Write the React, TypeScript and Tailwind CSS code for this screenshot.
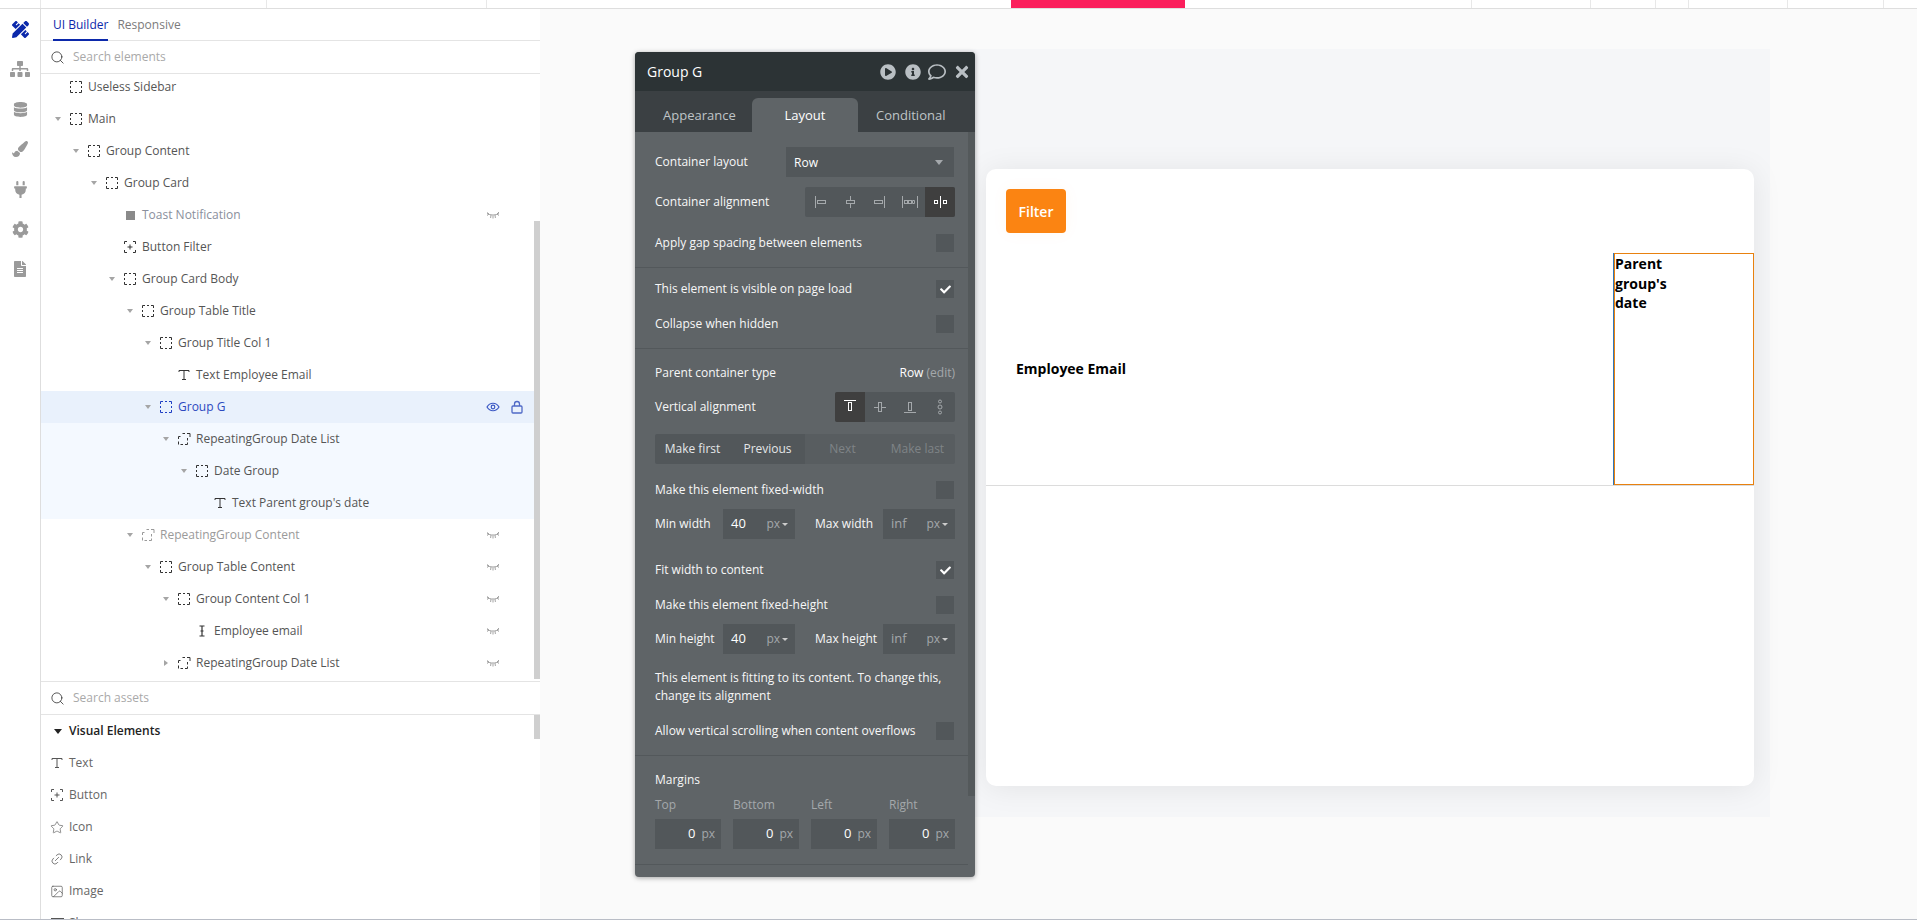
import React from "react";
import { FaPencilRuler, FaSitemap, FaDatabase, FaPaintBrush, FaPlug, FaCog, FaFileAlt, FaPlayCircle, FaInfoCircle, FaRegComment, FaTimes, FaCheck } from "react-icons/fa";
import { Search, Star, Link2, Image as ImageIcon } from "lucide-react";

const font = { fontFamily: '"Open Sans", sans-serif' };

function GroupIcon({ color = "#333", rg = false }: { color?: string; rg?: boolean }) {
  return (
    <svg width="14" height="14" viewBox="0 0 14 14" fill="none" stroke={color} strokeWidth="1" className="shrink-0">
      {rg ? (
        <path d="M1.500 7V4.500H3.500M5.500 1.500H8M10 1.500h3V5M10.500 6v2.500M10.500 10.500v2H8M6 12.500H3.500M1.500 12.500v-3" />
      ) : (
        <path d="M1.500 4V1.500H4M6 1.500h2M10 1.500h2.500V4M12.500 6v2M12.500 10v2.500H10M8 12.500H6M4 12.500H1.500V10M1.500 8V6" />
      )}
    </svg>
  );
}
function ButtonIcon({ color = "#333" }: { color?: string }) {
  return (
    <svg width="14" height="14" viewBox="0 0 14 14" fill="none" stroke={color} strokeWidth="1" className="shrink-0">
      <path d="M1.500 4V1.500H4M10 1.500h2.500V4M12.500 10v2.500H10M4 12.500H1.500V10M7 4.500v5M4.500 7h5" />
    </svg>
  );
}
function TIcon({ color = "#333" }: { color?: string }) {
  return (
    <svg width="12" height="12" viewBox="0 0 12 12" fill="none" stroke={color} strokeWidth="1" className="shrink-0">
      <path d="M1 3V1.500h10V3M6 1.500v9M4 10.500h4" />
    </svg>
  );
}
function InputIcon() {
  return (
    <svg width="12" height="12" viewBox="0 0 12 12" fill="none" stroke="#333" strokeWidth="1.200" className="shrink-0">
      <path d="M3.500 1h5M3.500 11h5M6 1v10M4.500 6h3" />
    </svg>
  );
}
function EyeClosed() {
  return (
    <svg width="14" height="8" viewBox="0 0 14 8" fill="none" stroke="#9a9a9a" strokeWidth="0.900">
      <path d="M1 2.500c3.500 2 8.500 2 12 0M1 1.500l2 1.500M1 4.500l2-1.500M13 1l-2 2M13 4.500l-2-1.500M5 4l-.4 3M7 4.500v3M9 4l.4 3" />
    </svg>
  );
}
function EyeOpen() {
  return (
    <svg width="14" height="12" viewBox="0 0 14 12" fill="none" stroke="#3b58c4" strokeWidth="1.200">
      <path d="M1 6c3-5 9-5 12 0-3 5-9 5-12 0z" />
      <circle cx="7" cy="6" r="1.800" />
    </svg>
  );
}
function LockOpen() {
  return (
    <svg width="12" height="14" viewBox="0 0 12 14" fill="none" stroke="#4f69c6" strokeWidth="1.300">
      <rect x="1" y="6" width="10" height="7" rx="1" />
      <path d="M3.500 6V4a2.500 2.500 0 0 1 5 0V6" />
    </svg>
  );
}

type Row = { t: string; l: number; arrow?: "d" | "r"; icon: "g" | "rg" | "b" | "t" | "i" | "s"; hidden?: boolean; faded?: boolean; toast?: boolean; sel?: boolean; child?: boolean };
const rows: Row[] = [
  { t: "Useless Sidebar", l: 0, icon: "g" },
  { t: "Main", l: 0, arrow: "d", icon: "g" },
  { t: "Group Content", l: 1, arrow: "d", icon: "g" },
  { t: "Group Card", l: 2, arrow: "d", icon: "g" },
  { t: "Toast Notification", l: 3, icon: "s", hidden: true, toast: true },
  { t: "Button Filter", l: 3, icon: "b" },
  { t: "Group Card Body", l: 3, arrow: "d", icon: "g" },
  { t: "Group Table Title", l: 4, arrow: "d", icon: "g" },
  { t: "Group Title Col 1", l: 5, arrow: "d", icon: "g" },
  { t: "Text Employee Email", l: 6, icon: "t" },
  { t: "Group G", l: 5, arrow: "d", icon: "g", sel: true },
  { t: "RepeatingGroup Date List", l: 6, arrow: "d", icon: "rg", child: true },
  { t: "Date Group", l: 7, arrow: "d", icon: "g", child: true },
  { t: "Text Parent group's date", l: 8, icon: "t", child: true },
  { t: "RepeatingGroup Content", l: 4, arrow: "d", icon: "rg", hidden: true, faded: true },
  { t: "Group Table Content", l: 5, arrow: "d", icon: "g", hidden: true },
  { t: "Group Content Col 1", l: 6, arrow: "d", icon: "g", hidden: true },
  { t: "Employee email", l: 7, icon: "i", hidden: true },
  { t: "RepeatingGroup Date List", l: 6, arrow: "r", icon: "rg", hidden: true },
];

function TreeRow({ r }: { r: Row }) {
  const iconColor = r.sel ? "#1f3fc4" : r.faded ? "#999" : "#333";
  const textColor = r.sel ? "#2c49bf" : r.faded ? "#9a9a9a" : r.toast ? "#8a8f9c" : "#555";
  return (
    <div
      className={`h-8 flex items-center text-[12px] ${r.sel ? "bg-[#e9f1fc]" : r.child ? "bg-[#f4f9ff]" : ""}`}
      style={{ paddingLeft: 18 * r.l + 11 }}
    >
      <span className="w-[12px] shrink-0 flex justify-center">
        {r.arrow === "d" && <span className="w-0 h-0 border-l-[3.500px] border-r-[3.500px] border-t-[4px] border-l-transparent border-r-transparent border-t-[#a5a5a5]" />}
        {r.arrow === "r" && <span className="w-0 h-0 border-t-[3.500px] border-b-[3.500px] border-l-[4px] border-t-transparent border-b-transparent border-l-[#a5a5a5]" />}
      </span>
      <span className="w-[12px] ml-[6px] shrink-0 flex justify-center">
        {r.icon === "g" && <GroupIcon color={iconColor} />}
        {r.icon === "rg" && <GroupIcon color={iconColor} rg />}
        {r.icon === "b" && <ButtonIcon />}
        {r.icon === "t" && <TIcon />}
        {r.icon === "i" && <InputIcon />}
        {r.icon === "s" && <span className="w-[9px] h-[9px] bg-[#8a8a8a]" />}
      </span>
      <span className="ml-[6px] whitespace-nowrap" style={{ color: textColor }}>{r.t}</span>
      <span className="ml-auto flex items-center gap-[11px] pr-[11px]">
        <span className="w-[14px] flex justify-center">
          {r.hidden && <EyeClosed />}
          {r.sel && <EyeOpen />}
        </span>
        <span className="w-[12px] flex justify-center">{r.sel && <LockOpen />}</span>
      </span>
    </div>
  );
}

function AssetRow({ icon, label }: { icon: React.ReactNode; label: string }) {
  return (
    <div className="h-8 flex items-center pl-[9px] text-[12px] text-[#666]">
      <span className="w-[14px] flex justify-center">{icon}</span>
      <span className="ml-[5px]">{label}</span>
    </div>
  );
}

function SearchRow({ text }: { text: string }) {
  return (
    <div className="h-[33px] shrink-0 flex items-center pl-[9px] border-b border-[#e4e4e4]">
      <Search size={15} strokeWidth={1.300} color="#333" />
      <span className="ml-[8px] text-[12px] text-[#a9a9a9]">{text}</span>
    </div>
  );
}

function Sidebar() {
  return (
    <aside className="w-[499px] shrink-0 bg-white flex flex-col relative overflow-hidden">
      <div className="h-[32px] shrink-0 flex items-center pl-[12px] border-b border-[#e4e4e4] text-[12px]">
        <span className="h-[32px] pt-[2px] flex items-center text-[#0c29ab] border-b-2 border-[#0c29ab]">UI Builder</span>
        <span className="ml-[9px] pt-px text-[#7b7b7b]">Responsive</span>
      </div>
      <SearchRow text="Search elements" />
      <div className="h-[608px] shrink-0 border-b border-[#e4e4e4] flex overflow-hidden">
        <div className="w-[493px] shrink-0 -mt-[3px]">
          {rows.map((r, i) => <TreeRow key={i} r={r} />)}
        </div>
        <div className="w-[6px] pt-[147px]">
          <div className="h-[458px] bg-[#cfcfcf]" />
        </div>
      </div>
      <SearchRow text="Search assets" />
      <div className="flex relative flex-1 min-h-0">
        <div className="w-[493px] shrink-0">
          <div className="h-8 flex items-center pl-[13px] text-[12px] font-semibold text-[#222]">
            <span className="w-0 h-0 border-l-[4px] border-r-[4px] border-t-[5px] border-l-transparent border-r-transparent border-t-[#222]" />
            <span className="ml-[7px]">Visual Elements</span>
          </div>
          <AssetRow icon={<TIcon color="#555" />} label="Text" />
          <AssetRow icon={<ButtonIcon color="#555" />} label="Button" />
          <AssetRow icon={<Star size={15} strokeWidth={1.100} color="#555" />} label="Icon" />
          <AssetRow icon={<Link2 size={14} strokeWidth={1.200} color="#555" className="-rotate-45" />} label="Link" />
          <AssetRow icon={<ImageIcon size={15} strokeWidth={1.200} color="#555" />} label="Image" />
          <AssetRow icon={<span className="w-[13px] h-[11px] border border-[#555]" />} label="Shape" />
        </div>
        <div className="w-[6px]">
          <div className="h-[24px] bg-[#cfcfcf]" />
        </div>
      </div>
    </aside>
  );
}

function Check({ on = false }: { on?: boolean }) {
  return (
    <span className="w-[18px] h-[18px] bg-[#52575a] flex items-center justify-center shrink-0">
      {on && <FaCheck size={11} color="#fff" />}
    </span>
  );
}

function CheckRow({ label, on, className = "" }: { label: string; on?: boolean; className?: string }) {
  return (
    <div className={`h-[18px] flex items-center justify-between pr-px whitespace-nowrap ${className}`}>
      <span>{label}</span>
      <Check on={on} />
    </div>
  );
}

function Divider({ className = "" }: { className?: string }) {
  return <div className={`h-px bg-[#53585b] -ml-5 -mr-[13px] ${className}`} />;
}

function AlignSvg({ children, color }: { children: React.ReactNode; color: string }) {
  return (
    <svg width="30" height="30" viewBox="0 0 30 30" fill="none" stroke={color} strokeWidth="1">
      {children}
    </svg>
  );
}

const hAlign = [
  <><path d="M10.500 9v12" /><rect x="12.500" y="13.500" width="8" height="3" /></>,
  <><path d="M15.500 9v4.500M15.500 16.500V21" /><rect x="11.500" y="13.500" width="8" height="3" /></>,
  <><path d="M19.500 9v12" /><rect x="9.500" y="13.500" width="8" height="3" /></>,
  <><path d="M7.500 9v12M22.500 9v12" /><rect x="9.500" y="13.500" width="3" height="3" /><rect x="13.500" y="13.500" width="3" height="3" /><path d="M17.500 13.500h2v3h-2z" /></>,
  <><path d="M15.500 9v12" /><rect x="9.500" y="13.500" width="3" height="3" /><rect x="18.500" y="13.500" width="3" height="3" /></>,
];
const vAlign = [
  <><path d="M9 8.500h12" /><rect x="13.500" y="10.500" width="3" height="8" /></>,
  <><path d="M9 15.500h4.500M16.500 15.500H21" /><rect x="13.500" y="10.500" width="3" height="9" /></>,
  <><path d="M9 20.500h12" /><rect x="13.500" y="10.500" width="3" height="8" /></>,
  <><circle cx="15" cy="9.500" r="1.500" /><circle cx="15" cy="15" r="2" /><circle cx="15" cy="20.500" r="1.500" /></>,
];

function Segments({ icons, active }: { icons: React.ReactNode[]; active: number }) {
  return (
    <div className="flex bg-[#52575a] rounded-[2px] overflow-hidden">
      {icons.map((ic, i) => (
        <span key={i} className={`w-[30px] h-[30px] ${i === active ? "bg-[#3f3f3f]" : ""}`}>
          <AlignSvg color={i === active ? "#fff" : "#a4a8ab"}>{ic}</AlignSvg>
        </span>
      ))}
    </div>
  );
}

function SizeInput({ value, muted }: { value: string; muted?: boolean }) {
  return (
    <div className="w-[72px] h-[30px] bg-[#52575a] flex items-center pl-2 pr-[7px]">
      <span className={`text-[13px] ${muted ? "text-[#a4a8ab]" : "text-white"}`}>{value}</span>
      <span className="ml-auto text-[12px] text-[#a4a8ab]">px</span>
      <span className="ml-[2px] w-0 h-0 border-l-[3px] border-r-[3px] border-t-[3px] border-l-transparent border-r-transparent border-t-[#ccc]" />
    </div>
  );
}

function SizeRow({ a, b, className = "" }: { a: string; b: string; className?: string }) {
  return (
    <div className={`h-[30px] flex items-center ${className}`}>
      <span className="w-[68px]">{a}</span>
      <SizeInput value="40" />
      <span className="ml-5 w-[68px] whitespace-nowrap">{b}</span>
      <SizeInput value="inf" muted />
    </div>
  );
}

function PropertyPanel() {
  return (
    <div className="absolute left-[95px] top-[43px] w-[340px] h-[825px] rounded-[4px] overflow-hidden bg-[#5f6467] text-[12px] text-[#f7f7f7] shadow-[0_1px_5px_rgba(0,0,0,0.35)] flex flex-col">
      <div className="h-[39px] shrink-0 bg-[#2c3335] flex items-center pl-3 text-[14px] text-white">
        <span>Group G</span>
        <span className="ml-auto flex items-center pr-[4px] mt-px">
          <FaPlayCircle size={16} color="#b9bfc3" />
          <FaInfoCircle size={16} color="#b9bfc3" className="ml-[9px]" />
          <FaRegComment size={18} color="#b9bfc3" className="ml-[7px]" />
          <FaTimes size={18} color="#b9bfc3" className="ml-[7px]" />
        </span>
      </div>
      <div className="h-[41px] shrink-0 bg-[#3b4043] flex items-end pl-[117px] relative text-[13px]">
        <span className="absolute left-[28px] bottom-[7px] text-[#bfc4c7]">Appearance</span>
        <span className="w-[106px] h-[34px] pt-px bg-[#5f6467] rounded-t-[6px] flex items-center justify-center text-white">Layout</span>
        <span className="absolute left-[241px] bottom-[7px] text-[#bfc4c7]">Conditional</span>
      </div>
      <div className="flex-1 flex min-h-0">
        <div className="w-[333px] shrink-0 pl-5 pr-[13px]">
          <div className="h-[30px] mt-[15px] flex items-center">
            <span className="w-[131px]">Container layout</span>
            <div className="w-[168px] h-[30px] pt-px bg-[#52575a] flex items-center pl-2 pr-[11px] text-white">
              <span>Row</span>
              <span className="ml-auto w-0 h-0 border-l-[4px] border-r-[4px] border-t-[5px] border-l-transparent border-r-transparent border-t-[#a4a8ab]" />
            </div>
          </div>
          <div className="h-[30px] mt-[10px] flex items-center justify-between">
            <span>Container alignment</span>
            <Segments icons={hAlign} active={4} />
          </div>
          <CheckRow label="Apply gap spacing between elements" className="mt-[17px]" />
          <Divider className="mt-[15px]" />
          <CheckRow label="This element is visible on page load" on className="mt-[12px]" />
          <CheckRow label="Collapse when hidden" className="mt-[17px]" />
          <Divider className="mt-[15px]" />
          <div className="h-[18px] mt-[15px] flex items-center justify-between">
            <span>Parent container type</span>
            <span className="text-white">Row <span className="text-[#a4a8ab]">(edit)</span></span>
          </div>
          <div className="h-[30px] mt-[10px] flex items-center justify-between">
            <span>Vertical alignment</span>
            <Segments icons={vAlign} active={0} />
          </div>
          <div className="h-[30px] mt-[12px] flex text-center leading-[30px] rounded-[2px] overflow-hidden">
            <span className="w-[75px] bg-[#52575a] text-[#e4e6e8]">Make first</span>
            <span className="w-[75px] bg-[#52575a] text-[#e4e6e8]">Previous</span>
            <span className="w-[75px] bg-[#585d60] text-[#7f8487]">Next</span>
            <span className="w-[75px] bg-[#585d60] text-[#7f8487]">Make last</span>
          </div>
          <CheckRow label="Make this element fixed-width" className="mt-[17px]" />
          <SizeRow a="Min width" b="Max width" className="mt-[10px]" />
          <CheckRow label="Fit width to content" on className="mt-[22px]" />
          <CheckRow label="Make this element fixed-height" className="mt-[17px]" />
          <SizeRow a="Min height" b="Max height" className="mt-[10px]" />
          <p className="mt-[15px] leading-[18px] whitespace-nowrap">This element is fitting to its content. To change this,<br />change its alignment</p>
          <CheckRow label="Allow vertical scrolling when content overflows" className="mt-[17px]" />
          <Divider className="mt-[15px]" />
          <div className="h-[18px] mt-[15px] flex items-center">Margins</div>
          <div className="h-[18px] mt-[7px] flex text-[#a4a8ab]">
            <span className="w-[78px]">Top</span>
            <span className="w-[78px]">Bottom</span>
            <span className="w-[78px]">Left</span>
            <span className="w-[66px]">Right</span>
          </div>
          <div className="h-[30px] mt-[5px] flex gap-3">
            {[0, 1, 2, 3].map((i) => (
              <div key={i} className="w-[66px] h-[30px] bg-[#52575a] flex items-center justify-end pr-[6px]">
                <span className="text-white text-[13px]">0</span>
                <span className="ml-[6px] text-[#a4a8ab]">px</span>
              </div>
            ))}
          </div>
          <Divider className="mt-[15px]" />
        </div>
        <div className="w-[7px]">
          <div className="h-[664px] bg-[#54595b]" />
        </div>
      </div>
    </div>
  );
}

function Canvas() {
  return (
    <main className="flex-1 min-w-0 relative bg-[#fafafa] overflow-hidden pt-[40px] pl-[150px]">
      <div className="w-[1080px] h-[768px] bg-[#f5f6f8] pt-[120px] pl-[296px]">
        <div className="w-[768px] h-[617px] bg-white rounded-[10px] shadow-[0_2px_30px_rgba(0,0,0,0.08)] pt-5">
          <button className="ml-5 w-[60px] h-[44px] rounded-[4px] bg-[#fb8412] text-white text-[14px] font-semibold shadow-[0_0_16px_rgba(251,132,18,0.05)]">Filter</button>
          <div className="mt-5 h-[233px] flex border-b border-[#dcdcdc]">
            <div className="flex-1 flex items-center pl-[30px] pb-[2px] text-[14px] font-bold text-black">Employee Email</div>
            <div className="w-[141px] border-l border-[#2f76b8]">
              <div className="h-full border border-[#e8810f]">
                <div className="w-[60px] text-[14px] leading-[19.600px] font-bold text-black">Parent group's date</div>
              </div>
            </div>
          </div>
        </div>
      </div>
      <PropertyPanel />
    </main>
  );
}

function Rail() {
  const icons = [
    <FaPencilRuler size={17} color="#0c29ab" />,
    <FaSitemap size={20} color="#9a9a9a" />,
    <FaDatabase size={15} color="#9a9a9a" />,
    <FaPaintBrush size={16} color="#9a9a9a" />,
    <FaPlug size={17} color="#9a9a9a" />,
    <FaCog size={17} color="#9a9a9a" />,
    <FaFileAlt size={16} color="#9a9a9a" />,
  ];
  return (
    <nav className="w-[41px] shrink-0 border-r border-[#dedede] bg-white flex flex-col items-center">
      {icons.map((ic, i) => (
        <span key={i} className="h-[40px] flex items-center justify-center">{ic}</span>
      ))}
    </nav>
  );
}

function TopBar() {
  return (
    <header className="h-[9px] shrink-0 bg-white border-b border-[#dedede] flex">
      <span className="w-[41px] border-r border-[#e8e8e8]" />
      <span className="w-[226px] border-r border-[#e8e8e8]" />
      <span className="w-[220px] border-r border-[#e8e8e8]" />
      <span className="w-[524px]" />
      <span className="w-[174px] bg-[#fb1f5c]" />
      <span className="w-[287px] border-r border-[#e8e8e8]" />
      <span className="w-[119px] border-r border-[#e8e8e8]" />
      <span className="w-[65px] border-r border-[#e8e8e8]" />
      <span className="w-[33px] border-r border-[#e8e8e8]" />
      <span className="w-[99px] border-r border-[#e8e8e8]" />
      <span className="w-[96px] border-r border-[#e8e8e8]" />
    </header>
  );
}

export default function App() {
  return (
    <div className="w-[1917px] h-[920px] flex flex-col overflow-hidden bg-white border-b border-[#b9bdc6]" style={font}>
      <TopBar />
      <div className="flex-1 flex min-h-0">
        <Rail />
        <Sidebar />
        <Canvas />
      </div>
    </div>
  );
}
